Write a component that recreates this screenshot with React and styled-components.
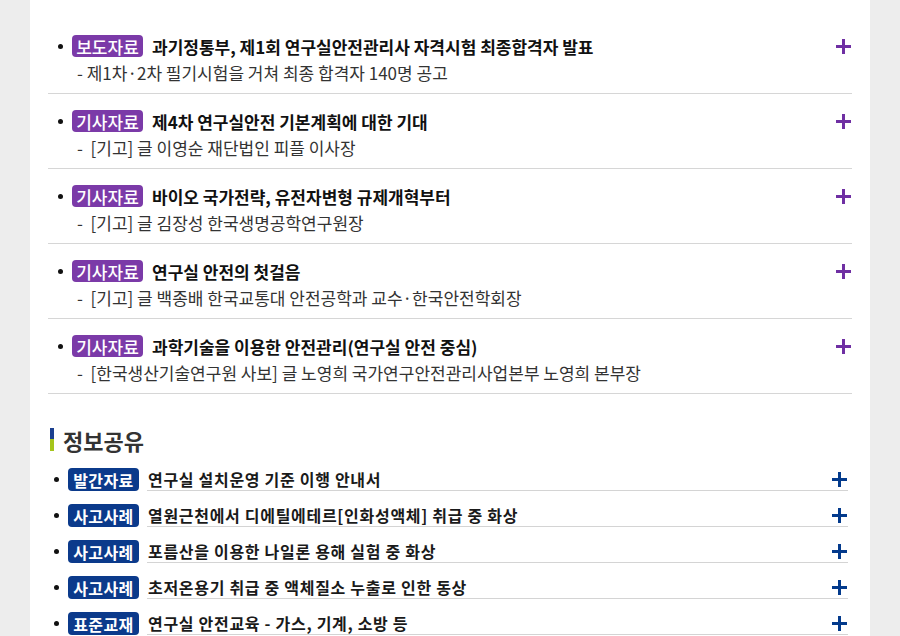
import React from "react";
import styled, { createGlobalStyle } from "styled-components";

const Global = createGlobalStyle`
  html, body { margin: 0; padding: 0; background: #ededed; }
  body { font-family: "Noto Sans CJK KR", "Noto Sans", sans-serif; }
  * { box-sizing: border-box; }
`;

const Panel = styled.div`
  width: 840px;
  margin: 0 auto;
  background: #fff;
  padding: 20px 18px 0;
  min-height: 636px;
`;

const NewsList = styled.ul`
  list-style: none;
  margin: 0;
  padding: 0;
`;

const NewsRow = styled.li`
  padding: 15px 0 8px;
  border-bottom: 1px solid #d6d6d6;
  & + & {
    padding-top: 16px;
  }
`;

const TitleLine = styled.div`
  display: flex;
  align-items: center;
  height: 22px;
`;

const Dot = styled.span`
  flex: none;
  width: 5px;
  height: 5px;
  border-radius: 50%;
  background: #111;
  margin-left: ${(p) => p.$left}px;
  margin-right: ${(p) => p.$right}px;
`;

const Badge = styled.span`
  flex: none;
  display: inline-flex;
  align-items: center;
  justify-content: center;
  width: 71px;
  height: ${(p) => p.$h}px;
  border-radius: 4px;
  background: ${(p) => p.$bg};
  color: #fff;
  font-size: ${(p) => p.$fs}px;
  font-weight: ${(p) => p.$w};
  letter-spacing: ${(p) => p.$ls}px;
`;

const NewsTitle = styled.span`
  margin-left: 9px;
  font-size: 17px;
  font-weight: 700;
  color: #111;
  white-space: nowrap;
`;

const Plus = styled.svg`
  flex: none;
  margin-left: auto;
  margin-right: 1px;
  display: block;
`;

const SubLine = styled.div`
  margin-top: 4px;
  padding-left: 29px;
  height: 24px;
  line-height: 24px;
  font-size: 17px;
  color: #333;
  white-space: pre;
`;

const Heading = styled.h2`
  display: flex;
  align-items: center;
  margin: 34px 0 17px;
  height: 23px;
  font-size: 22px;
  font-weight: 700;
  color: #333;
`;

const HeadBar = styled.span`
  flex: none;
  width: 4px;
  height: 23px;
  margin-left: 2px;
  margin-right: 9px;
  background: linear-gradient(#1b3f8f 0 50%, #a5c51b 50% 100%);
`;

const InfoList = styled.ul`
  list-style: none;
  margin: 0;
  padding: 0;
  display: flex;
  flex-direction: column;
  gap: 13px;
`;

const InfoRow = styled.li`
  display: flex;
  align-items: center;
  height: 23px;
`;

const InfoTitle = styled.div`
  flex: 1;
  display: flex;
  align-items: center;
  height: 23px;
  margin-left: 8px;
  margin-right: 4px;
  padding-left: 1px;
  border-bottom: 1px solid #d4d4d4;
  font-size: 16px;
  font-weight: 700;
  color: #1a1a1a;
  letter-spacing: 0.7px;
  white-space: nowrap;
`;

const PlusIcon = ({ color }) => (
  <Plus width="15" height="15" viewBox="0 0 15 15">
    <rect x="6" y="0" width="3" height="15" fill={color} />
    <rect x="0" y="6" width="15" height="3" fill={color} />
  </Plus>
);

const news = [
  {
    tag: "보도자료",
    title: "과기정통부, 제1회 연구실안전관리사 자격시험 최종합격자 발표",
    sub: "- 제1차·2차 필기시험을 거쳐 최종 합격자 140명 공고",
  },
  {
    tag: "기사자료",
    title: "제4차 연구실안전 기본계획에 대한 기대",
    sub: "-  [기고] 글 이영순 재단법인 피플 이사장",
  },
  {
    tag: "기사자료",
    title: "바이오 국가전략, 유전자변형 규제개혁부터",
    sub: "-  [기고] 글 김장성 한국생명공학연구원장",
  },
  {
    tag: "기사자료",
    title: "연구실 안전의 첫걸음",
    sub: "-  [기고] 글 백종배 한국교통대 안전공학과 교수·한국안전학회장",
  },
  {
    tag: "기사자료",
    title: "과학기술을 이용한 안전관리(연구실 안전 중심)",
    sub: "-  [한국생산기술연구원 사보] 글 노영희 국가연구안전관리사업본부 노영희 본부장",
  },
];

const infos = [
  { tag: "발간자료", title: "연구실 설치운영 기준 이행 안내서" },
  { tag: "사고사례", title: "열원근천에서 디에틸에테르[인화성액체] 취급 중 화상" },
  { tag: "사고사례", title: "포름산을 이용한 나일론 용해 실험 중 화상" },
  { tag: "사고사례", title: "초저온용기 취급 중 액체질소 누출로 인한 동상" },
  { tag: "표준교재", title: "연구실 안전교육 - 가스, 기계, 소방 등" },
];

export default function App() {
  return (
    <>
      <Global />
      <Panel>
        <NewsList>
          {news.map((n, i) => (
            <NewsRow key={i}>
              <TitleLine>
                <Dot $left={10} $right={9} />
                <Badge $bg="#7b3aa8" $h={22} $w={500} $fs={17} $ls={0}>
                  {n.tag}
                </Badge>
                <NewsTitle>{n.title}</NewsTitle>
                <PlusIcon color="#6f2fa3" />
              </TitleLine>
              <SubLine>{n.sub}</SubLine>
            </NewsRow>
          ))}
        </NewsList>

        <Heading>
          <HeadBar />
          정보공유
        </Heading>

        <InfoList>
          {infos.map((n, i) => (
            <InfoRow key={i}>
              <Dot $left={6} $right={9} />
              <Badge $bg="#0b3a8b" $h={23} $w={700} $fs={16} $ls={0.4}>
                {n.tag}
              </Badge>
              <InfoTitle>
                {n.title}
                <PlusIcon color="#033a8c" />
              </InfoTitle>
            </InfoRow>
          ))}
        </InfoList>
      </Panel>
    </>
  );
}
